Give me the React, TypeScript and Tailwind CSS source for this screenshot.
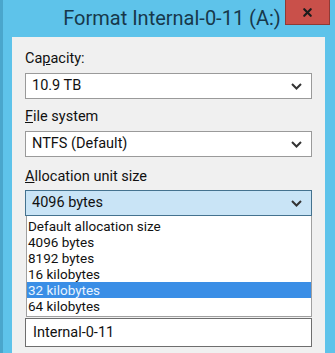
import { X } from 'lucide-react'

const Chevron = () => (
  <svg width="11" height="7" viewBox="0 0 11 7" className="shrink-0">
    <path d="M1 1 L5.5 5.5 L10 1" stroke="#333" strokeWidth="2" fill="none" />
  </svg>
)

function Combo({ value, active }: { value: string; active?: boolean }) {
  return (
    <div
      className={`h-[26px] flex items-center justify-between pl-[6px] pr-[9px] border ${
        active ? 'bg-[#c9e4f6] border-[#44728f]' : 'bg-white border-[#9a9a9a]'
      }`}
    >
      <span>{value}</span>
      <Chevron />
    </div>
  )
}

const options = [
  'Default allocation size',
  '4096 bytes',
  '8192 bytes',
  '16 kilobytes',
  '32 kilobytes',
  '64 kilobytes',
]

export default function App() {
  return (
    <div
      className="w-[335px] h-[353px] bg-[#5ec3ea] flex flex-col text-[14.5px] text-[#111] overflow-hidden border-l-[3px] border-[#4aa6cc]"
      style={{ fontFamily: 'Roboto, "Noto Sans", sans-serif' }}
    >
      <div className="h-[37px] flex items-start shrink-0">
        <div className="flex-1 pt-[4px] text-center pl-[56px] text-[20px] text-[#17384a] leading-[28px]">
          Format Internal-0-11 (A:)
        </div>
        <div className="w-[45px] h-[25px] mr-[5px] bg-[#c9504a] border border-[#8f3a35] border-t-0 flex items-center justify-center">
          <X size={13} strokeWidth={4} color="#1c1c1c" />
        </div>
      </div>

      <div className="flex-1 ml-[9px] mr-[10px] bg-[#f0f0f0] px-[13px] pt-[12px]">
        <div className="h-[20px] leading-[20px] mb-[4px]">
          Ca<span className="underline">p</span>acity:
        </div>
        <Combo value="10.9 TB" />

        <div className="h-[20px] leading-[20px] mt-[8px] mb-[4px]">
          <span className="underline">F</span>ile system
        </div>
        <Combo value="NTFS (Default)" />

        <div className="h-[20px] leading-[20px] mt-[10px] mb-[3px]">
          <span className="underline">A</span>llocation unit size
        </div>
        <div className="relative">
          <Combo value="4096 bytes" active />
          <div className="absolute left-[1px] right-0 top-[26px] z-10 bg-white border border-[#a0a0a0] border-t-0 py-[2px] text-[13.5px]">
            {options.map((o) => (
              <div
                key={o}
                className={`h-[16px] leading-[16px] px-[1px] ${
                  o === '32 kilobytes' ? 'bg-[#3a8ee6] text-[#e8f4ff]' : ''
                }`}
              >
                {o}
              </div>
            ))}
          </div>
        </div>

        <div className="h-[102px]" />
        <div className="h-[29px] flex items-center pl-[7px] bg-white border border-[#6e6e6e]">
          Internal-0-11
        </div>
      </div>
    </div>
  )
}
